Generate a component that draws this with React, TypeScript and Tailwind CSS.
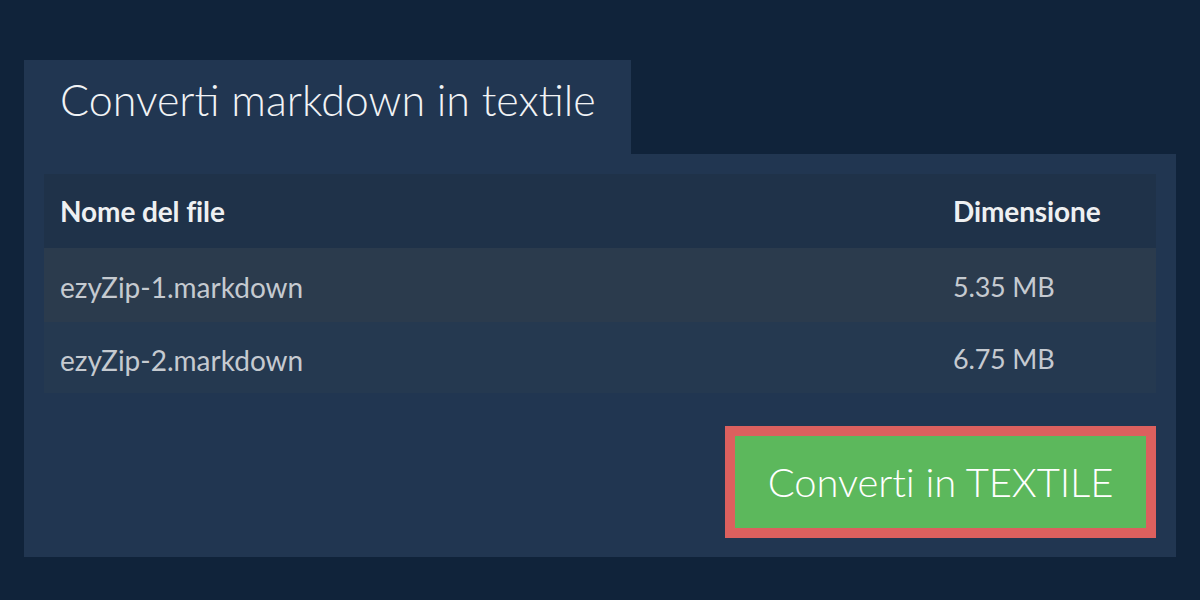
const files = [
  { name: "ezyZip-1.markdown", size: "5.35 MB" },
  { name: "ezyZip-2.markdown", size: "6.75 MB" },
];

export default function App() {
  return (
    <div className="h-[600px] w-[1200px] bg-[#10233a] px-6 pt-[60px] font-['Lato',sans-serif]">
      {/* Tab title */}
      <div className="h-[94px] w-[607px] bg-[#213651] pl-9 pt-[18px]">
        <h1 className="text-[43px] font-light leading-none text-[#f1f3f5]">Converti markdown in textile</h1>
      </div>

      {/* Panel */}
      <div className="flex flex-col bg-[#213651] px-5 pt-5 pb-[19px]">
        <div className="flex flex-col">
          <div className="grid h-[74px] grid-cols-[1fr_219px] items-center bg-[#1f3249] text-[28px] font-bold tracking-[-0.1px] text-[#eef0f2]">
            <div className="pl-4">Nome del file</div>
            <div className="pl-4">Dimensione</div>
          </div>
          {files.map((f, i) => (
            <div
              key={f.name}
              className={
                "grid grid-cols-[1fr_219px] items-center pt-1 text-[#c5cad0] " +
                (i === 0 ? "h-[74px] bg-[#2b3b4d]" : "h-[71px] bg-[#253950]")
              }
            >
              <div className="pl-4 text-[28px]">{f.name}</div>
              <div className="pl-4 text-[27px] tracking-[-0.2px]">{f.size}</div>
            </div>
          ))}
        </div>

        <div className="mt-[33px] flex justify-end">
          <button className="flex h-[112px] w-[431px] items-center justify-center border-[10px] border-[#dc605e] bg-[#5cb85c] text-[40px] font-light tracking-[-0.1px] text-white">
            Converti in TEXTILE
          </button>
        </div>
      </div>
    </div>
  );
}
